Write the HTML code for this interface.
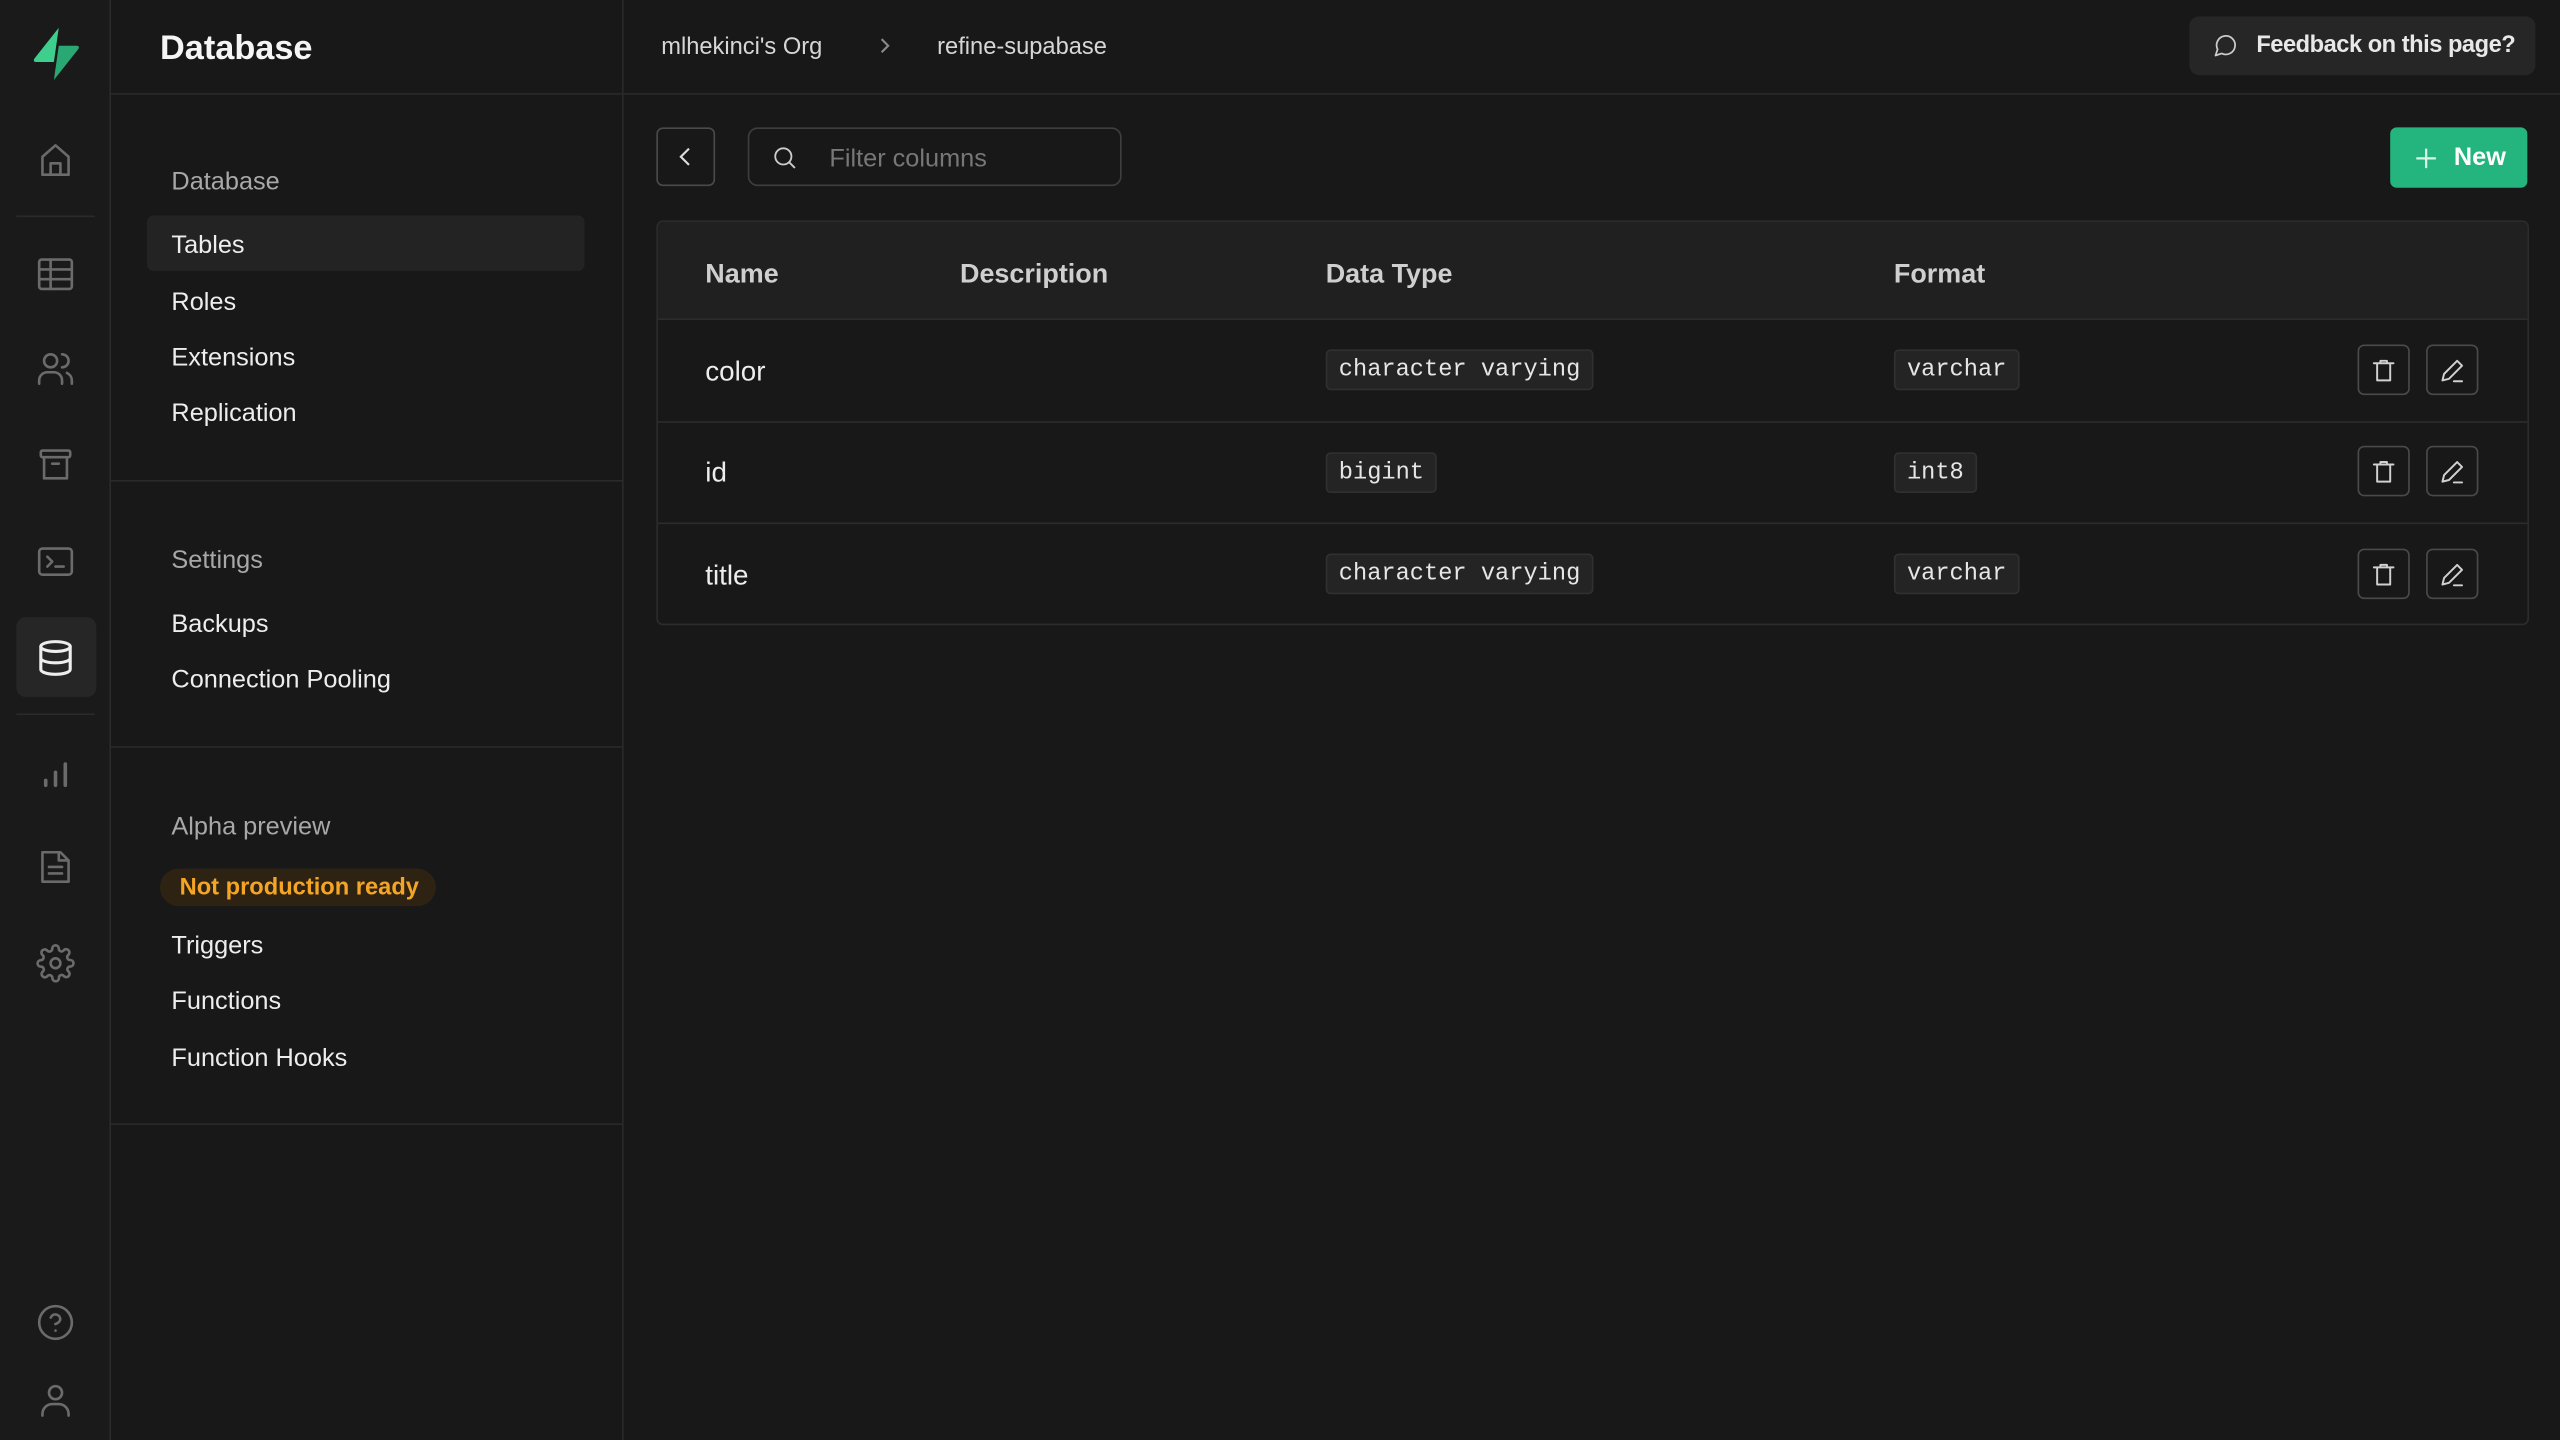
<!DOCTYPE html>
<html><head><meta charset="utf-8"><style>
*{box-sizing:border-box;margin:0;padding:0}
html,body{width:2560px;height:1440px;overflow:hidden;background:#181818}
#w{position:absolute;left:0;top:0;width:1568px;height:882px;transform:scale(1.632653);transform-origin:0 0;font-family:"Liberation Sans",sans-serif;color:#ededed;background:#181818}
.a{position:absolute}
.ib{left:0;top:0;width:68px;height:882px;border-right:1px solid #2a2a2a;background:#1a1a1a}
.ic{position:absolute;left:22px;width:24px;height:24px}
.ic svg{width:24px;height:24px;fill:none;stroke:#6b6b6b;stroke-width:1.6;stroke-linecap:round;stroke-linejoin:round}
.sb{left:68px;top:0;width:314px;height:882px;border-right:1px solid #2a2a2a}
.hl{background:#2a2a2a;height:1px}
.it{position:absolute;left:37px;font-size:15.5px;color:#ededed;margin-top:2px}
.gh{position:absolute;left:37px;font-size:15.5px;color:#a8a8a8;margin-top:2px}
.chip{display:inline-block;font-family:"Liberation Mono",monospace;font-size:14.5px;color:#e6e6e6;background:#242424;border:1px solid #303030;border-radius:3px;padding:3px 7px 2px;line-height:18px}
.th{position:absolute;top:159px;font-size:16.5px;font-weight:bold;color:#cfcfcf}
.td{position:absolute;font-size:17px;color:#ededed;margin-top:1px}
.btn{position:absolute;width:32px;height:31px;border:1px solid #4a4a4a;border-radius:4px}
.btn svg{position:absolute;left:7px;top:7px;width:16px;height:16px;fill:none;stroke:#d0d0d0;stroke-width:1.2;stroke-linecap:round;stroke-linejoin:round}
</style></head><body><div id="w">
<div class="a ib">
 <svg class="a" style="left:19px;top:17px" width="31" height="32" viewBox="0 0 31 32"><path d="M17 0 L2 19 Q1 21 3 21 H14 Z" fill="#3ecf8e"/><path d="M14 32 L29 13 Q30 11 28 11 H17 Z" fill="#2aa874"/></svg>
 <div class="ic" style="top:86px"><svg viewBox="0 0 24 24"><path d="M4 21V10l8-7 8 7v11zM9 21v-7h6v7"/></svg></div>
 <div class="a hl" style="left:10px;top:132px;width:48px"></div>
 <div class="ic" style="top:156px"><svg viewBox="0 0 24 24"><rect x="2" y="3" width="20" height="18" rx="1.5"/><path d="M2 9h20M2 15h20M9 3v18"/></svg></div>
 <div class="ic" style="top:214px"><svg viewBox="0 0 24 24"><circle cx="9" cy="7" r="4"/><path d="M2 21v-2a5 5 0 0 1 5-5h4a5 5 0 0 1 5 5v2M16 3a4 4 0 0 1 0 8M22 21v-2a5 5 0 0 0-3-4.6"/></svg></div>
 <div class="ic" style="top:273px"><svg viewBox="0 0 24 24"><rect x="3" y="3" width="18" height="4" rx="1"/><path d="M5 7v13h14V7M10 11h4"/></svg></div>
 <div class="ic" style="top:332px"><svg viewBox="0 0 24 24"><rect x="2" y="4" width="20" height="16" rx="2"/><path d="M7 9l3 3-3 3M12 15h5"/></svg></div>
 <div class="a" style="left:10px;top:378px;width:49px;height:49px;background:#262626;border-radius:6px"></div>
 <div class="ic" style="top:391px"><svg viewBox="0 0 24 24" style="stroke:#ededed;stroke-width:1.9"><ellipse cx="12" cy="5" rx="9" ry="3"/><path d="M3 5v14c0 1.7 4 3 9 3s9-1.3 9-3V5M3 12c0 1.7 4 3 9 3s9-1.3 9-3"/></svg></div>
 <div class="a hl" style="left:10px;top:437px;width:48px"></div>
 <div class="ic" style="top:461px"><svg viewBox="0 0 24 24"><path d="M6 20v-3M12 20v-8M18 20V7" stroke-width="2.2"/></svg></div>
 <div class="ic" style="top:519px"><svg viewBox="0 0 24 24"><path d="M4 3h11l5 5v13H4zM14 3v5h6M8 12h8M8 16h8"/></svg></div>
 <div class="ic" style="top:578px"><svg viewBox="0 0 24 24"><circle cx="12" cy="12" r="3"/><path d="M19.4 15a1.7 1.7 0 0 0 .3 1.8l.1.1a2 2 0 1 1-2.8 2.8l-.1-.1a1.7 1.7 0 0 0-1.8-.3 1.7 1.7 0 0 0-1 1.5V21a2 2 0 1 1-4 0v-.1a1.7 1.7 0 0 0-1.1-1.5 1.7 1.7 0 0 0-1.8.3l-.1.1a2 2 0 1 1-2.8-2.8l.1-.1a1.7 1.7 0 0 0 .3-1.8 1.7 1.7 0 0 0-1.5-1H3a2 2 0 1 1 0-4h.1a1.7 1.7 0 0 0 1.5-1.1 1.7 1.7 0 0 0-.3-1.8l-.1-.1a2 2 0 1 1 2.8-2.8l.1.1a1.7 1.7 0 0 0 1.8.3H9a1.7 1.7 0 0 0 1-1.5V3a2 2 0 1 1 4 0v.1a1.7 1.7 0 0 0 1 1.5 1.7 1.7 0 0 0 1.8-.3l.1-.1a2 2 0 1 1 2.8 2.8l-.1.1a1.7 1.7 0 0 0-.3 1.8V9a1.7 1.7 0 0 0 1.5 1H21a2 2 0 1 1 0 4h-.1a1.7 1.7 0 0 0-1.5 1z"/></svg></div>
 <div class="ic" style="top:798px"><svg viewBox="0 0 24 24"><circle cx="12" cy="12" r="10"/><path d="M9.1 9a3 3 0 0 1 5.8 1c0 2-3 3-3 3M12 17h.01"/></svg></div>
 <div class="ic" style="top:846px"><svg viewBox="0 0 24 24"><circle cx="12" cy="7" r="4"/><path d="M4 21v-1a6 6 0 0 1 6-6h4a6 6 0 0 1 6 6v1"/></svg></div>
</div>
<div class="a sb">
 <div class="a" style="left:30px;top:18px;font-size:21px;font-weight:bold;color:#f5f5f5">Database</div>
 <div class="a hl" style="left:0;top:57px;width:314px"></div>
 <div class="gh" style="top:101px">Database</div>
 <div class="a" style="left:22px;top:132px;width:268px;height:34px;background:#232323;border-radius:4px"></div>
 <div class="it" style="top:140px">Tables</div>
 <div class="it" style="top:175px">Roles</div>
 <div class="it" style="top:209px">Extensions</div>
 <div class="it" style="top:243px">Replication</div>
 <div class="a hl" style="left:0;top:294px;width:314px"></div>
 <div class="gh" style="top:333px">Settings</div>
 <div class="it" style="top:372px">Backups</div>
 <div class="it" style="top:406px">Connection Pooling</div>
 <div class="a hl" style="left:0;top:457px;width:314px"></div>
 <div class="gh" style="top:496px">Alpha preview</div>
 <div class="a" style="left:30px;top:532px;width:169px;height:23px;background:#2e2313;border-radius:12px;color:#f5a524;font-size:14.5px;font-weight:bold;padding:4px 0 0 12px">Not production ready</div>
 <div class="it" style="top:569px">Triggers</div>
 <div class="it" style="top:603px">Functions</div>
 <div class="it" style="top:638px">Function Hooks</div>
 <div class="a hl" style="left:0;top:688px;width:314px"></div>
</div>
<div class="a" style="left:405px;top:21px;font-size:14.5px;color:#d6d6d6">mlhekinci's Org</div>
<svg class="a" style="left:536px;top:21px" width="12" height="14" viewBox="0 0 12 14"><path d="M4 3l4 4-4 4" fill="none" stroke="#8a8a8a" stroke-width="1.3"/></svg>
<div class="a" style="left:574px;top:21px;font-size:14.5px;color:#d6d6d6">refine-supabase</div>
<div class="a" style="left:1341px;top:10px;width:212px;height:36px;background:#262626;border-radius:6px"></div>
<svg class="a" style="left:1355px;top:20px" width="16" height="16" viewBox="0 0 24 24"><path d="M3 21l1.9-5.7a8.5 8.5 0 1 1 3.8 3.8z" fill="none" stroke="#ccc" stroke-width="1.6" stroke-linejoin="round"/></svg>
<div class="a" style="left:1382px;top:20px;font-size:14.5px;font-weight:bold;color:#e8e8e8;letter-spacing:-0.3px">Feedback on this page?</div>
<div class="a hl" style="left:382px;top:57px;width:1186px"></div>
<div class="a" style="left:402px;top:78px;width:36px;height:36px;border:1px solid #4a4a4a;border-radius:4px"></div>
<svg class="a" style="left:413px;top:89px" width="14" height="14" viewBox="0 0 14 14"><path d="M9 2L4 7l5 5" fill="none" stroke="#ddd" stroke-width="1.3"/></svg>
<div class="a" style="left:458px;top:78px;width:229px;height:36px;border:1px solid #3e3e3e;border-radius:6px"></div>
<svg class="a" style="left:472px;top:88px" width="17" height="17" viewBox="0 0 24 24"><circle cx="11" cy="11" r="7" fill="none" stroke="#ccc" stroke-width="1.6"/><path d="M16 16l5 5" stroke="#ccc" stroke-width="1.6"/></svg>
<div class="a" style="left:508px;top:89px;font-size:15.5px;color:#777">Filter columns</div>
<div class="a" style="left:1464px;top:78px;width:84px;height:37px;background:#24b47e;border-radius:4px"></div>
<svg class="a" style="left:1478px;top:89px" width="16" height="16" viewBox="0 0 16 16"><path d="M8 2v12M2 8h12" stroke="#d8f5e8" stroke-width="1.4"/></svg>
<div class="a" style="left:1503px;top:88px;font-size:15.5px;font-weight:bold;color:#fff">New</div>
<div class="a" style="left:402px;top:135px;width:1147px;height:248px;border:1px solid #2c2c2c;border-radius:4px;overflow:hidden">
 <div class="a" style="left:0;top:0;width:1147px;height:60px;background:#202020;border-bottom:1px solid #2c2c2c"></div>
 <div class="a" style="left:0;top:122px;width:1147px;height:1px;background:#2c2c2c"></div>
 <div class="a" style="left:0;top:184px;width:1147px;height:1px;background:#2c2c2c"></div>
</div>
<div class="th" style="left:432px">Name</div>
<div class="th" style="left:588px">Description</div>
<div class="th" style="left:812px">Data Type</div>
<div class="th" style="left:1160px">Format</div>
<div class="td" style="left:432px;top:217px">color</div>
<div class="td" style="left:432px;top:279px">id</div>
<div class="td" style="left:432px;top:342px">title</div>
<div class="a" style="left:812px;top:214px"><span class="chip">character varying</span></div>
<div class="a" style="left:812px;top:277px"><span class="chip">bigint</span></div>
<div class="a" style="left:812px;top:339px"><span class="chip">character varying</span></div>
<div class="a" style="left:1160px;top:214px"><span class="chip">varchar</span></div>
<div class="a" style="left:1160px;top:277px"><span class="chip">int8</span></div>
<div class="a" style="left:1160px;top:339px"><span class="chip">varchar</span></div>
<div class="btn" style="left:1444px;top:211px"><svg viewBox="0 0 16 16"><path d="M2 3.5h12M6 3.5V2h4v1.5M4 3.5v10.5h8V3.5"/></svg></div>
<div class="btn" style="left:1486px;top:211px"><svg viewBox="0 0 16 16"><path d="M11 2l3 3-8 8-4 1 1-4zM9 14.5h5"/></svg></div>
<div class="btn" style="left:1444px;top:273px"><svg viewBox="0 0 16 16"><path d="M2 3.5h12M6 3.5V2h4v1.5M4 3.5v10.5h8V3.5"/></svg></div>
<div class="btn" style="left:1486px;top:273px"><svg viewBox="0 0 16 16"><path d="M11 2l3 3-8 8-4 1 1-4zM9 14.5h5"/></svg></div>
<div class="btn" style="left:1444px;top:336px"><svg viewBox="0 0 16 16"><path d="M2 3.5h12M6 3.5V2h4v1.5M4 3.5v10.5h8V3.5"/></svg></div>
<div class="btn" style="left:1486px;top:336px"><svg viewBox="0 0 16 16"><path d="M11 2l3 3-8 8-4 1 1-4zM9 14.5h5"/></svg></div>
</div></body></html>
